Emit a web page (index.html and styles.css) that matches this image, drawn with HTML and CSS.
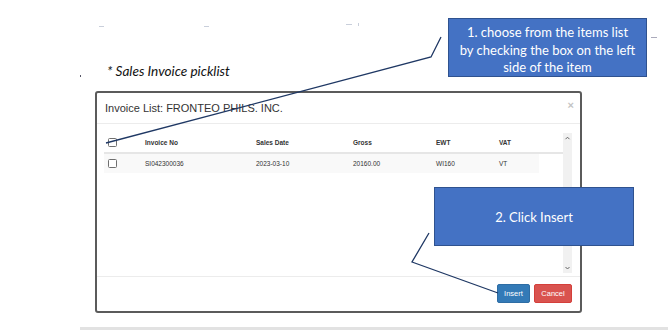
FILE: index.html
```html
<!DOCTYPE html>
<html>
<head>
<meta charset="utf-8">
<link rel="stylesheet" href="styles.css">
</head>
<body>
<div class="page">
  <span class="mark m1"></span>
  <span class="mark m2"></span>
  <span class="mark m3"></span>
  <span class="mark m4"></span>
  <span class="mark m5"></span>
  <span class="dot"></span>

  <p class="caption">* Sales Invoice picklist</p>

  <div class="modal">
    <div class="modal-header">
      <span class="modal-title">Invoice List: FRONTEO PHILS. INC.</span>
      <span class="close">×</span>
    </div>
    <div class="modal-body">
      <div class="scroll">
        <div class="table">
          <div class="row head">
            <div class="cell"><span class="cb"></span></div>
            <div class="cell">Invoice No</div>
            <div class="cell">Sales Date</div>
            <div class="cell">Gross</div>
            <div class="cell">EWT</div>
            <div class="cell">VAT</div>
          </div>
          <div class="row data">
            <div class="cell"><span class="cb"></span></div>
            <div class="cell">SI042300036</div>
            <div class="cell">2023-03-10</div>
            <div class="cell">20160.00</div>
            <div class="cell">WI160</div>
            <div class="cell">VT</div>
          </div>
        </div>
        <div class="scrollbar">
          <svg width="9" height="8" viewBox="0 0 9 8"><path d="M2.5 5.2 L4.5 3.2 L6.5 5.2" fill="none" stroke="#666" stroke-width="1"/></svg>
          <svg width="9" height="8" viewBox="0 0 9 8"><path d="M2.5 3 L4.5 5 L6.5 3" fill="none" stroke="#666" stroke-width="1"/></svg>
        </div>
      </div>
    </div>
    <div class="modal-footer">
      <button class="btn btn-primary">Insert</button>
      <button class="btn btn-danger">Cancel</button>
    </div>
  </div>

  <div class="rule"></div>

  <svg class="lines" width="668" height="330" viewBox="0 0 668 330">
    <polyline points="441,37 431,57 106,143" fill="none" stroke="#1f3864" stroke-width="1.3"/>
    <polyline points="429,233 412,262 498,293" fill="none" stroke="#1f3864" stroke-width="1.3"/>
  </svg>

  <div class="callout callout-1">1. choose from the items list<br>by checking the box on the left<br>side of the item</div>
  <div class="callout callout-2">2. Click Insert</div>
</div>
</body>
</html>
```

FILE: styles.css
```css
* { box-sizing: border-box; }
html, body { margin: 0; padding: 0; background: #fff; }
body { font-family: "Liberation Sans", Arial, sans-serif; }

.page {
  position: relative;
  width: 668px;
  height: 330px;
  overflow: hidden;
  padding-top: 62px;
}

.mark { position: absolute; height: 1px; background: #c9cfdb; }
.m1 { left: 99px; top: 26px; width: 5px; }
.m2 { left: 204px; top: 26px; width: 5px; }
.m3 { left: 346px; top: 24px; width: 6px; }
.m4 { left: 358px; top: 23px; width: 1px; height: 3px; }
.m5 { left: 651px; top: 37px; width: 6px; background: #aab; }
.dot { position: absolute; left: 80px; top: 75px; width: 1px; height: 2px; background: #556; }

.caption {
  margin: 0 0 0 107px;
  font-family: Lato, "Open Sans", sans-serif;
  font-style: italic;
  font-size: 13.6px;
  line-height: 19px;
  color: #111;
}

.modal {
  margin: 10px 0 0 95px;
  width: 487px;
  height: 222px;
  border: 2px solid #5b5b5b;
  border-radius: 3px;
  background: #fff;
  display: flex;
  flex-direction: column;
}

.modal-header {
  height: 31px;
  border-bottom: 1px solid #ececec;
  display: flex;
  align-items: center;
  justify-content: space-between;
  padding: 0 6px 1px 8px;
}
.modal-title { font-size: 11px; color: #333; }
.close { font-size: 11px; color: #c4c4c4; font-weight: bold; margin-top: -6px; }

.modal-body {
  height: 152px;
  padding: 9px 8px 3px 7px;
}
.scroll { display: flex; height: 140px; }
.table { flex: 1; }
.row {
  display: grid;
  grid-template-columns: 36px 111px 97px 83px 63px 45px;
  font-size: 6.5px;
  color: #333;
}
.row.head {
  height: 21px;
  border-bottom: 2px solid #e6e6e6;
  font-weight: bold;
  align-items: center;
}
.row.data { height: 19px; align-items: center; }
.row.data .cell { background: #f9f9f9; height: 100%; display: flex; align-items: center; }
.cell { padding-left: 5px; }
.cell:first-child { padding-left: 4px; }
.cb {
  display: block;
  width: 9px;
  height: 9px;
  border: 1px solid #6f6f6f;
  border-radius: 1.5px;
  background: #fff;
}

.scrollbar {
  width: 9px;
  background: #f1f1f1;
  display: flex;
  flex-direction: column;
  justify-content: space-between;
  padding: 1px 0;
}
.scrollbar svg { display: block; }

.modal-footer {
  flex: 1;
  border-top: 1px solid #ececec;
  display: flex;
  justify-content: flex-end;
  align-items: flex-start;
  gap: 4px;
  padding: 7px 8px 0 0;
}
.btn {
  font-family: "Liberation Sans", Arial, sans-serif;
  font-size: 7.5px;
  height: 19px;
  color: #fff;
  border-radius: 2px;
  padding: 0;
  margin: 0;
  cursor: pointer;
}
.btn-primary { width: 33px; background: #337ab7; border: 1px solid #2e6da4; }
.btn-danger { width: 38px; background: #d9534f; border: 1px solid #d43f3a; }

.rule {
  margin: 14px 0 0 80px;
  height: 3px;
  background: #e2e2e2;
}

.lines { position: absolute; left: 0; top: 0; pointer-events: none; }

.callout {
  position: absolute;
  background: #4472c4;
  border: 1px solid #2f528f;
  color: #fff;
  font-family: Lato, "Open Sans", sans-serif;
  font-size: 13px;
  text-align: center;
}
.callout-1 {
  left: 448px; top: 18px; width: 199px; height: 59px;
  line-height: 17.5px;
  padding-top: 5px;
}
.callout-2 {
  left: 434px; top: 187px; width: 200px; height: 59px;
  display: flex; align-items: center; justify-content: center;
}
```
